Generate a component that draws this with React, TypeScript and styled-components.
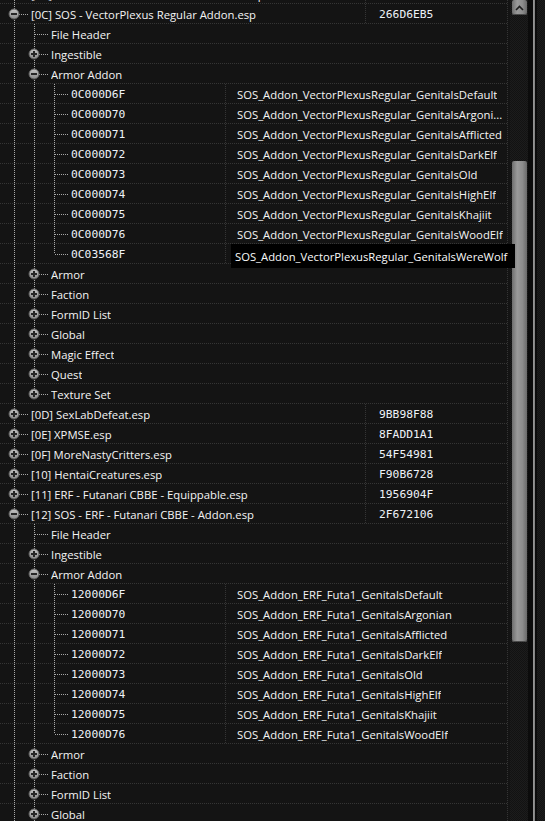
import React from 'react';
import styled, { createGlobalStyle, css } from 'styled-components';

const GlobalStyle = createGlobalStyle`
  html, body {
    margin: 0;
    padding: 0;
    background: #141414;
  }
  body {
    font-family: "Open Sans", "Noto Sans", sans-serif;
  }
`;

type Guide = 'pass' | 'none';
type Joint = 'tee' | 'end';

interface RowData {
  kind: 'file' | 'group' | 'record';
  guides: Guide[];
  joint: Joint;
  exp?: 'plus' | 'minus';
  label: string;
  editorId?: string;
  hash?: string;
}

const Screen = styled.div`
  position: relative;
  width: 545px;
  height: 821px;
  overflow: hidden;
  display: flex;
  background: #141414;
`;

const TreePane = styled.div`
  width: 510px;
  flex: none;
  overflow: hidden;
`;

const TreeBody = styled.div`
  margin-top: -16px;
  width: 508px;
`;

const Row = styled.div`
  display: grid;
  grid-template-columns: 226px 140px 142px;
  height: 20px;
  background: repeating-linear-gradient(90deg, #353535 0 1px, transparent 1px 2px) left bottom / 100% 1px no-repeat;
`;

const Cell = styled.div<{ $span: number }>`
  grid-column: span ${p => p.$span};
  display: flex;
  align-items: center;
  min-width: 0;
  overflow: hidden;
  white-space: nowrap;
  position: relative;
  &::after {
    content: '';
    position: absolute;
    right: 0;
    top: 0;
    bottom: 0;
    width: 1px;
    background: repeating-linear-gradient(180deg, #353535 0 1px, transparent 1px 2px);
  }
`;

const Indent = styled.div`
  display: flex;
  align-self: stretch;
  padding-left: 4px;
  flex: none;
`;

const TreeCell = styled.span<{ $line: Guide | Joint }>`
  position: relative;
  width: 20px;
  flex: none;
  ${p =>
    p.$line !== 'none' &&
    css`
      &::before {
        content: '';
        position: absolute;
        left: 10px;
        top: 0;
        width: 1px;
        height: ${p.$line === 'end' ? '10px' : '100%'};
        background: repeating-linear-gradient(180deg, #a8a8a8 0 1px, transparent 1px 2px);
      }
    `}
  ${p =>
    (p.$line === 'tee' || p.$line === 'end') &&
    css`
      &::after {
        content: '';
        position: absolute;
        left: 11px;
        top: 10px;
        width: 14px;
        height: 1px;
        background: repeating-linear-gradient(90deg, #a8a8a8 0 1px, transparent 1px 2px);
      }
    `}
`;

const ExpanderBox = styled.svg`
  position: absolute;
  left: 4px;
  top: 4px;
  z-index: 1;
`;

const Label = styled.span<{ $pad?: number }>`
  margin-left: ${p => (p.$pad !== undefined ? p.$pad : 7)}px;
  margin-top: 2px;
  font-size: 11.3px;
  color: #f4f4f4;
  line-height: 20px;
  overflow: hidden;
`;

const Mono = styled.span<{ $pad?: number }>`
  margin-left: ${p => (p.$pad !== undefined ? p.$pad : 7)}px;
  margin-top: 2px;
  font-family: "DejaVu Sans Mono", "Liberation Mono", monospace;
  font-size: 11.3px;
  color: #eef2f8;
  line-height: 20px;
`;

const ScrollBar = styled.div`
  width: 18px;
  flex: none;
  display: flex;
  flex-direction: column;
  align-items: center;
  background: repeating-conic-gradient(#1c1c1c 0 25%, #121212 0 50%) 0 0 / 2px 2px;
`;

const thumbLook = css`
  width: 15px;
  border-radius: 2px;
  background: linear-gradient(90deg, #6e6e6e 0%, #9a9a9a 35%, #8c8c8c 70%, #6a6a6a 100%);
  box-shadow: inset 0 -1px 0 #4a4a4a;
`;

const ArrowButton = styled.div`
  ${thumbLook};
  height: 15px;
  display: flex;
  align-items: center;
  justify-content: center;
`;

const Thumb = styled.div`
  ${thumbLook};
  margin-top: 146px;
  height: 481px;
`;

const Edge = styled.div`
  flex: 1;
  display: flex;
`;

const EdgeDark = styled.div<{ $w: number }>`
  width: ${p => p.$w}px;
  background: #0b0b0b;
`;

const EdgeLine = styled.div`
  width: 2px;
  background: linear-gradient(90deg, #9a9a9a, #7c7c7c);
`;

const EdgeTrack = styled.div`
  flex: 1;
  background: repeating-conic-gradient(#1c1c1c 0 25%, #121212 0 50%) 0 0 / 2px 2px;
`;

const Hint = styled.div`
  position: absolute;
  left: 231px;
  top: 244px;
  width: 280px;
  height: 24px;
  padding-left: 4px;
  background: #000;
  color: #fafafa;
  font-size: 11.25px;
  line-height: 26px;
  white-space: nowrap;
  z-index: 5;
`;

const Expander: React.FC<{ kind: 'plus' | 'minus' }> = ({ kind }) => (
  <ExpanderBox width="12" height="12" viewBox="0 0 12 12">
    <defs>
      <linearGradient id={`g-${kind}`} x1="0" y1="0" x2="0" y2="1">
        <stop offset="0" stopColor="#c4c4c4" />
        <stop offset="1" stopColor="#8a8a8a" />
      </linearGradient>
    </defs>
    <circle cx="6" cy="6" r="5" fill={`url(#g-${kind})`} stroke="#5c5c5c" strokeWidth="1" />
    <rect x="3" y="5" width="6" height="2" fill="#262626" />
    {kind === 'plus' && <rect x="5" y="3" width="2" height="6" fill="#262626" />}
  </ExpanderBox>
);

const file = (label: string, hash: string, exp: 'plus' | 'minus'): RowData => ({
  kind: 'file', guides: [], joint: 'tee', exp, label, hash,
});

const group = (label: string, joint: Joint = 'tee', exp?: 'plus' | 'minus'): RowData => ({
  kind: 'group', guides: ['pass'], joint, exp, label,
});

const record = (formId: string, editorId: string, joint: Joint = 'tee'): RowData => ({
  kind: 'record', guides: ['pass', 'pass'], joint, label: formId, editorId,
});

const vp = 'SOS_Addon_VectorPlexusRegular_Genitals';
const erf = 'SOS_Addon_ERF_Futa1_Genitals';

// the last VectorPlexus record's editor id is shown by the hint box on top of it
const rows: RowData[] = [
  file('[0B] SOS - VectorPlexus Muscular Addon.esp', 'C83F1A09', 'plus'),
  file('[0C] SOS - VectorPlexus Regular Addon.esp', '266D6EB5', 'minus'),
  group('File Header'),
  group('Ingestible', 'tee', 'plus'),
  group('Armor Addon', 'tee', 'minus'),
  record('0C000D6F', vp + 'Default'),
  record('0C000D70', vp + 'Argoni...'),
  record('0C000D71', vp + 'Afflicted'),
  record('0C000D72', vp + 'DarkElf'),
  record('0C000D73', vp + 'Old'),
  record('0C000D74', vp + 'HighElf'),
  record('0C000D75', vp + 'Khajiit'),
  record('0C000D76', vp + 'WoodElf'),
  record('0C03568F', '', 'end'),
  group('Armor', 'tee', 'plus'),
  group('Faction', 'tee', 'plus'),
  group('FormID List', 'tee', 'plus'),
  group('Global', 'tee', 'plus'),
  group('Magic Effect', 'tee', 'plus'),
  group('Quest', 'tee', 'plus'),
  group('Texture Set', 'end', 'plus'),
  file('[0D] SexLabDefeat.esp', '9BB98F88', 'plus'),
  file('[0E] XPMSE.esp', '8FADD1A1', 'plus'),
  file('[0F] MoreNastyCritters.esp', '54F54981', 'plus'),
  file('[10] HentaiCreatures.esp', 'F90B6728', 'plus'),
  file('[11] ERF - Futanari CBBE - Equippable.esp', '1956904F', 'plus'),
  file('[12] SOS - ERF - Futanari CBBE - Addon.esp', '2F672106', 'minus'),
  group('File Header'),
  group('Ingestible', 'tee', 'plus'),
  group('Armor Addon', 'tee', 'minus'),
  record('12000D6F', erf + 'Default'),
  record('12000D70', erf + 'Argonian'),
  record('12000D71', erf + 'Afflicted'),
  record('12000D72', erf + 'DarkElf'),
  record('12000D73', erf + 'Old'),
  record('12000D74', erf + 'HighElf'),
  record('12000D75', erf + 'Khajiit'),
  record('12000D76', erf + 'WoodElf', 'end'),
  group('Armor', 'tee', 'plus'),
  group('Faction', 'tee', 'plus'),
  group('FormID List', 'tee', 'plus'),
  group('Global', 'tee', 'plus'),
];

const TreeIndent: React.FC<{ row: RowData }> = ({ row }) => (
  <Indent>
    {row.guides.map((g, i) => (
      <TreeCell key={i} $line={g} />
    ))}
    <TreeCell $line={row.joint}>{row.exp && <Expander kind={row.exp} />}</TreeCell>
  </Indent>
);

const TreeRow: React.FC<{ row: RowData }> = ({ row }) => {
  if (row.kind === 'file') {
    return (
      <Row>
        <Cell $span={2}>
          <TreeIndent row={row} />
          <Label>{row.label}</Label>
        </Cell>
        <Cell $span={1}>
          <Mono $pad={13}>{row.hash}</Mono>
        </Cell>
      </Row>
    );
  }
  if (row.kind === 'record') {
    return (
      <Row>
        <Cell $span={1}>
          <TreeIndent row={row} />
          <Mono>{row.label}</Mono>
        </Cell>
        <Cell $span={2}>
          <Label $pad={11}>{row.editorId}</Label>
        </Cell>
      </Row>
    );
  }
  return (
    <Row>
      <Cell $span={3}>
        <TreeIndent row={row} />
        <Label>{row.label}</Label>
      </Cell>
    </Row>
  );
};

const App: React.FC = () => {
  return (
    <>
      <GlobalStyle />
      <Screen>
        <TreePane>
          <TreeBody>
            {rows.map((r, i) => (
              <TreeRow key={i} row={r} />
            ))}
          </TreeBody>
        </TreePane>
        <ScrollBar>
          <ArrowButton>
            <svg width="9" height="6" viewBox="0 0 9 6">
              <polyline points="1,5 4.5,1.5 8,5" fill="none" stroke="#1e1e1e" strokeWidth="1.6" />
            </svg>
          </ArrowButton>
          <Thumb />
        </ScrollBar>
        <Edge>
          <EdgeDark $w={5} />
          <EdgeLine />
          <EdgeDark $w={2} />
          <EdgeTrack />
        </Edge>
        <Hint>SOS_Addon_VectorPlexusRegular_GenitalsWereWolf</Hint>
      </Screen>
    </>
  );
};

export default App;
